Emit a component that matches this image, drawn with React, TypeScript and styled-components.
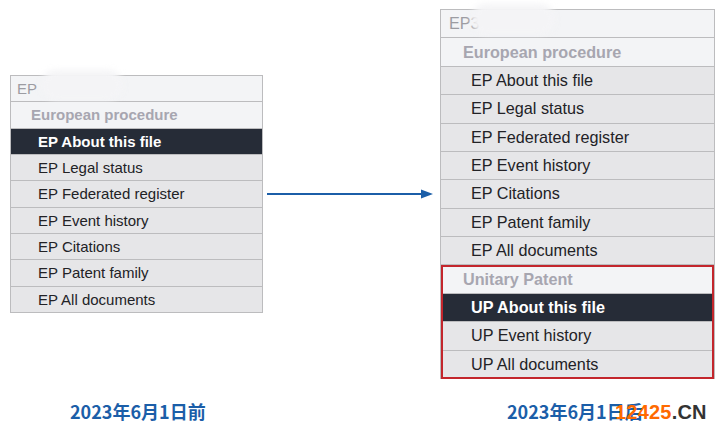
import React from "react";
import styled, { createGlobalStyle, css } from "styled-components";

const Global = createGlobalStyle`
  html, body { margin: 0; padding: 0; background: #ffffff; }
  body { font-family: "Liberation Sans", Arial, sans-serif; }
`;

type Size = "sm" | "lg";

const dims = {
  sm: { fs: 15, row: 26.33, head: 6, group: 20, item: 27 },
  lg: { fs: 16.2, row: 28.38, head: 8, group: 22, item: 30 },
};

const Page = styled.div`
  width: 720px;
  height: 431px;
  box-sizing: border-box;
  padding: 9px 0 0 10px;
  display: grid;
  grid-template-columns: 253px 177px 275px;
  grid-template-rows: 370px auto;
  align-items: start;
  overflow: hidden;
`;

const Panel = styled.div<{ $size: Size; $top: number }>`
  margin-top: ${(p) => p.$top}px;
  border: 1px solid #bcbcbe;
  border-bottom: none;
  display: flex;
  flex-direction: column;
  font-size: ${(p) => dims[p.$size].fs}px;
  background: #e6e6e8;
`;

const Row = styled.div<{ $size: Size }>`
  position: relative;
  box-sizing: border-box;
  height: ${(p) => dims[p.$size].row}px;
  border-bottom: 1px solid #bcbcbe;
  display: flex;
  align-items: center;
  white-space: nowrap;
`;

const HeadRow = styled(Row)`
  background: #f3f4f6;
  color: #9c9ca2;
  padding-left: ${(p) => dims[p.$size].head}px;
  font-weight: 400;
`;

const GroupRow = styled(Row)`
  background: #f3f4f6;
  color: #a7a6b0;
  font-weight: 700;
  padding-left: ${(p) => dims[p.$size].group}px;
`;

const ItemRow = styled(Row)<{ $active?: boolean }>`
  background: #e6e6e8;
  color: #222226;
  padding-left: ${(p) => dims[p.$size].item}px;
  ${(p) =>
    p.$active &&
    css`
      background: #262c37;
      color: #ffffff;
      font-weight: 700;
    `}
`;

const Blur = styled.span<{ $w: number }>`
  position: absolute;
  left: 30px;
  top: -6px;
  width: ${(p) => p.$w}px;
  height: 30px;
  border-radius: 16px;
  background: #f4f4f6;
  filter: blur(3px);
`;

const Group = styled.div`
  position: relative;
  display: flex;
  flex-direction: column;
  &::after {
    content: "";
    position: absolute;
    inset: 0 0 0 0;
    border: 2px solid #c3262c;
    pointer-events: none;
  }
`;

const ArrowWrap = styled.div`
  margin-top: 180px;
  margin-left: 4px;
  height: 10px;
  display: flex;
`;

const Label = styled.div<{ $ml: number }>`
  position: relative;
  margin-top: 20px;
  margin-left: ${(p) => p.$ml}px;
  font-family: "Noto Sans CJK SC", "Liberation Sans", sans-serif;
  font-size: 18px;
  line-height: 24px;
  font-weight: 700;
  color: #1b5ea8;
  white-space: nowrap;
`;

const Watermark = styled.span`
  position: absolute;
  left: 108px;
  top: 1px;
  font-family: "Liberation Sans", Arial, sans-serif;
  font-size: 20px;
  font-weight: 700;
  color: #333333;
  letter-spacing: 0.2px;
`;

const Orange = styled.span`
  color: #ff6a00;
`;

const epItems = [
  "EP About this file",
  "EP Legal status",
  "EP Federated register",
  "EP Event history",
  "EP Citations",
  "EP Patent family",
  "EP All documents",
];

function Menu({ size, top, activeEp, withUp }: { size: Size; top: number; activeEp: boolean; withUp: boolean }) {
  return (
    <Panel $size={size} $top={top}>
      <HeadRow $size={size}>
        EP{size === "lg" ? "3" : ""}
        <Blur $w={size === "sm" ? 82 : 84} />
      </HeadRow>
      <GroupRow $size={size}>European procedure</GroupRow>
      {epItems.map((t, i) => (
        <ItemRow key={t} $size={size} $active={activeEp && i === 0}>
          {t}
        </ItemRow>
      ))}
      {withUp && (
        <Group>
          <GroupRow $size={size}>Unitary Patent</GroupRow>
          <ItemRow $size={size} $active>
            UP About this file
          </ItemRow>
          <ItemRow $size={size}>UP Event history</ItemRow>
          <ItemRow $size={size}>UP All documents</ItemRow>
        </Group>
      )}
    </Panel>
  );
}

export default function App() {
  return (
    <>
      <Global />
      <Page>
        <Menu size="sm" top={66} activeEp withUp={false} />
        <ArrowWrap>
          <svg width="166" height="10" viewBox="0 0 166 10">
            <line x1="0" y1="5" x2="156" y2="5" stroke="#1b5ea8" strokeWidth="2" />
            <polygon points="154,0.5 166,5 154,9.5" fill="#1b5ea8" />
          </svg>
        </ArrowWrap>
        <Menu size="lg" top={0} activeEp={false} withUp />
        <Label $ml={60}>2023年6月1日前</Label>
        <div />
        <Label $ml={67}>
          2023年6月1日后
          <Watermark>
            <Orange>12425</Orange>.CN
          </Watermark>
        </Label>
      </Page>
    </>
  );
}
